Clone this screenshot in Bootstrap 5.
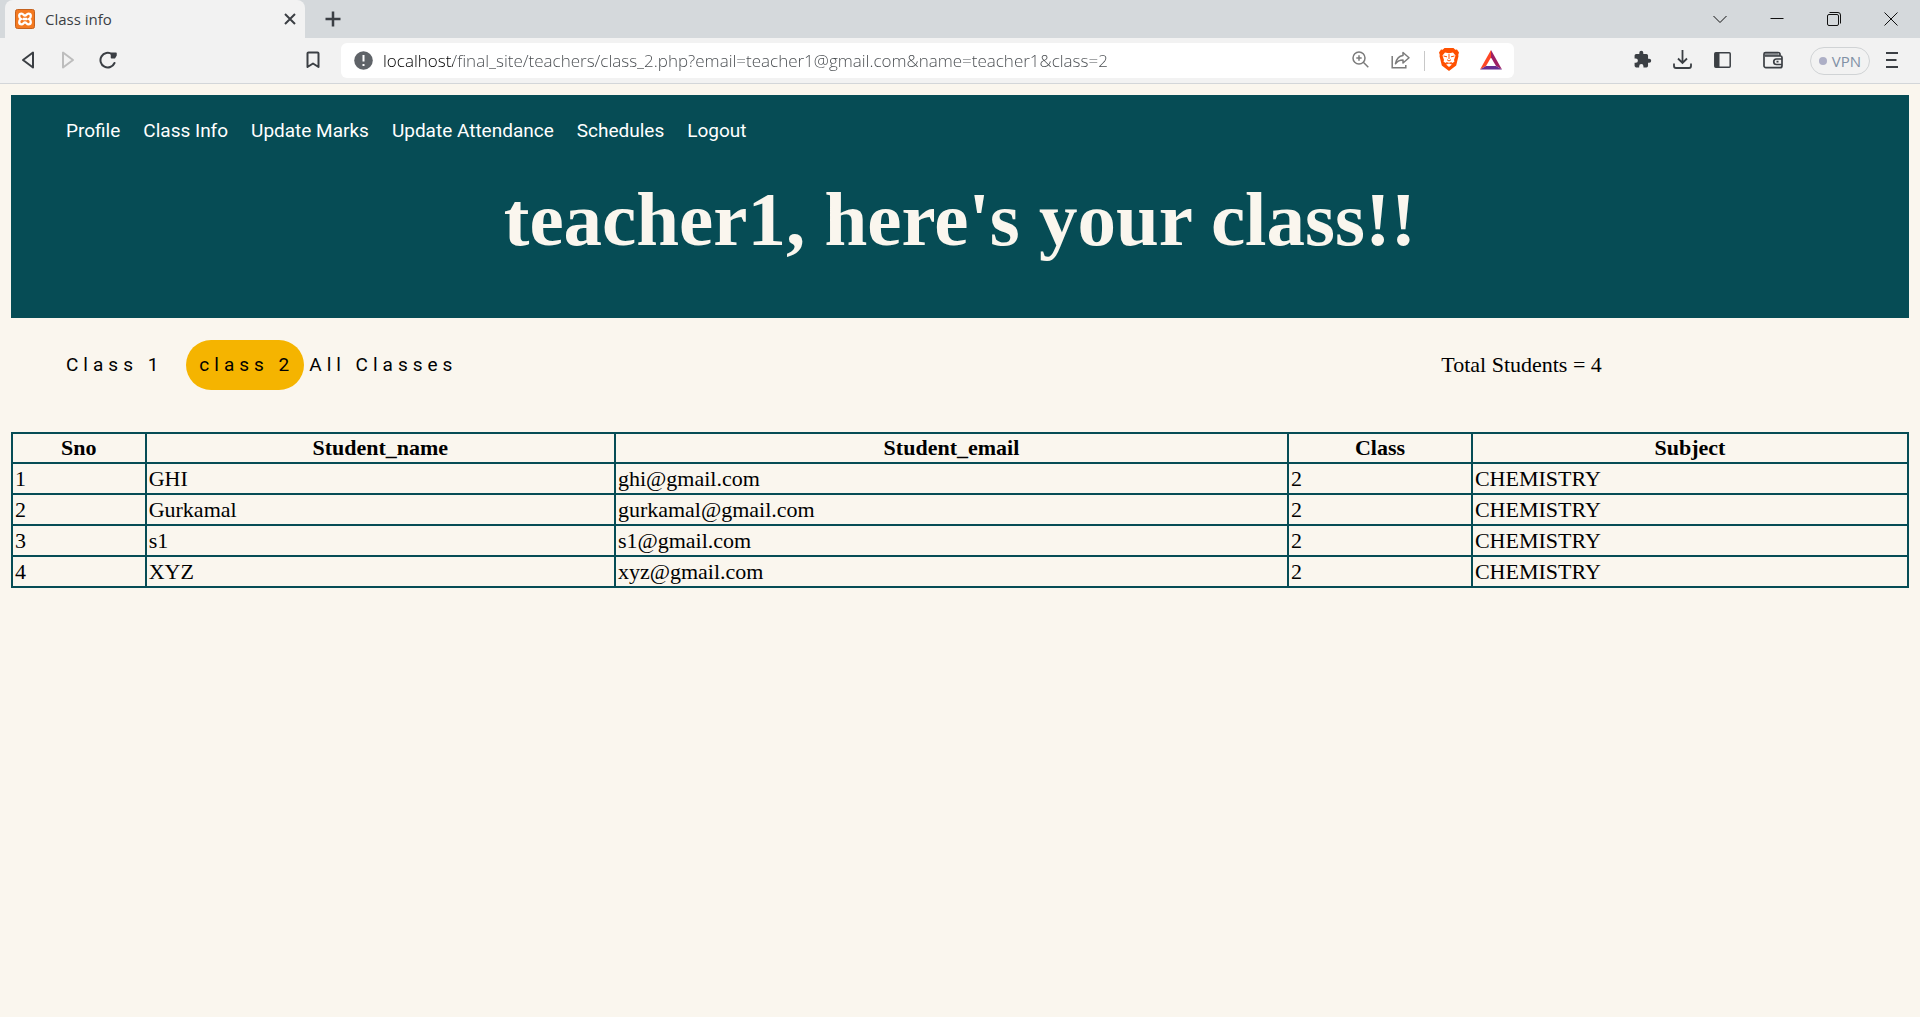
<!DOCTYPE html>
<html lang="en">
<head>
<meta charset="utf-8">
<meta name="viewport" content="width=device-width, initial-scale=1">
<title>Class info</title>
<link href="https://cdn.jsdelivr.net/npm/bootstrap@5.3.0/dist/css/bootstrap.min.css" rel="stylesheet">
<style>
  :root { --teal: #064c55; --cream: #faf6ee; --amber: #f5b400; --ink: #3b3f44; }
  body { background: var(--cream); color: #000; font: 22px/26px "Liberation Serif", serif; }
  .chrome-ui { font: 15px/20px "Open Sans", sans-serif; color: var(--ink); }
  .chrome-ui svg { display: block; fill: none; stroke: currentColor; stroke-width: 2; }
  .tab-strip { background: #d5d9dc; height: 38px; padding: 0 1px 0 5px; }
  .browser-tab { width: 300px; height: 38px; background: #f2f2f2; border-radius: 8px 8px 0 0; padding: 0 5px 0 10px; gap: 10px; }
  .tool-btn { width: 40px; height: 36px; padding: 0; border: 0; background: none; color: inherit; display: flex; align-items: center; justify-content: center; flex: none; }
  .tool-strip .tool-btn { padding-bottom: 2px; }
  .tab-btn { width: 20px; }
  .win-btn { width: 57px; color: #111; }
  .win-btn svg { stroke-width: 1; }
  .tool-strip { background: #f2f2f2; height: 46px; border-bottom: 1px solid #d3d6d9; }
  .tools-left { width: 341px; padding: 0 8px; }
  .tools-right { width: 406px; padding-right: 8px; }
  .wallet-btn { margin-left: 11px; }
  .rewards-btn { margin-left: 2px; }
  .address-bar { height: 35px; background: #fff; border-radius: 6px; padding: 0 3px 0 13px; min-width: 0; }
  .address-bar input { border: 0; outline: 0; padding: 0; margin-left: 10px; min-width: 0; font: 300 17px/24px "Open Sans", sans-serif; color: #45494d;
    background: linear-gradient(90deg, #000 70px, #45494d 70px) text; -webkit-background-clip: text; -webkit-text-fill-color: transparent; }
  .address-bar .tool-btn { color: #7b7b7b; }
  .address-bar .tool-btn svg { stroke-width: 1.5; }
  .divider { width: 1px; height: 20px; background: #c8c8c8; margin: 0 4px; }
  .vpn-btn { width: 60px; height: 28px; border: 1px solid #d0d3d5; border-radius: 14px; background: none; color: #8090a5; padding: 0; gap: 5px; margin: 0 2px 0 17px; }
  .vpn-dot { width: 8px; height: 8px; border-radius: 50%; background: #adafc6; }

  .page-body { padding: 11px; }
  .hero { background: var(--teal); padding: 21px 55px 56px; }
  .hero-nav { gap: 23px; font: 19px/30px Roboto, sans-serif; }
  .hero-nav a { color: #fff; text-decoration: none; }
  .hero h1 { color: var(--cream); font: bold 77px/86px "Liberation Serif", serif; margin: 30px 0 0; }
  .class-row { padding: 22px 0 42px 55px; }
  .class-links { font: 19px/24px Roboto, sans-serif; letter-spacing: 5px; }
  .class-links a { color: #000; text-decoration: none; }
  .class-links .current { background: var(--amber); border-radius: 25px; padding: 13px 10px 13px 13px; margin: 0 5px 0 23px; }
  .total-col { width: 25%; margin-right: 7px; }
  .students { width: 100%; border-collapse: collapse; table-layout: fixed; }
  .students th, .students td { border: 2px solid var(--teal); padding: 1px 2px; height: 31px; }
  .students th { text-align: center; height: 30px; }
</style>
</head>
<body>
<header class="chrome-ui">
  <div class="tab-strip d-flex align-items-center">
    <div class="browser-tab d-flex align-items-center">
      <svg width="20" height="20" viewBox="0 0 20 20"><rect x=".5" y=".5" width="19" height="19" rx="2" fill="#f47920" stroke="#c4621f" stroke-width="1"/><path d="M6.500 4.700c-3 0-3 4-.5 5.300-2.500 1.300-2.500 5.300.5 5.300 2 0 2-2 3.500-2s1.500 2 3.500 2c3 0 3-4 .5-5.300 2.500-1.300 2.500-5.300-.5-5.300-2 0-2 2-3.500 2s-1.500-2-3.500-2zM8 10h4" stroke="#fff" stroke-width="2.300" /></svg>
      <span class="flex-grow-1">Class info</span>
      <button class="tool-btn tab-btn" aria-label="Close tab"><svg width="12" height="12" viewBox="0 0 12 12"><path d="M1 1l10 10M11 1L1 11"/></svg></button>
    </div>
    <button class="tool-btn ms-2" aria-label="New tab"><svg width="16" height="16" viewBox="0 0 16 16"><path d="M8 .5v15M.5 8h15" stroke-width="2.500"/></svg></button>
    <div class="d-flex ms-auto">
      <button class="tool-btn win-btn" aria-label="Search tabs"><svg width="14" height="14" viewBox="0 0 14 14"><path d="M.5 4L7 10.500 13.500 4"/></svg></button>
      <button class="tool-btn win-btn" aria-label="Minimize"><svg width="14" height="14" viewBox="0 0 14 14"><path d="M.5 6.500h13"/></svg></button>
      <button class="tool-btn win-btn" aria-label="Restore"><svg width="14" height="14" viewBox="0 0 14 14"><rect x=".5" y="2.500" width="11" height="11" rx="1.500"/><path d="M2.500 .5H11a2.500 2.500 0 0 1 2.500 2.500v8.500"/></svg></button>
      <button class="tool-btn win-btn" aria-label="Close"><svg width="14" height="14" viewBox="0 0 14 14"><path d="M.5.5l13 13M13.500.5l-13 13"/></svg></button>
    </div>
  </div>
  <div class="tool-strip d-flex align-items-center">
    <div class="tools-left d-flex">
      <button class="tool-btn" aria-label="Back"><svg width="14" height="18" viewBox="0 0 14 18"><path d="M12 1.500v15L2 9z" stroke-linejoin="round"/></svg></button>
      <button class="tool-btn" aria-label="Forward" disabled><svg width="14" height="18" viewBox="0 0 14 18"><path d="M2 1.500v15L12 9z" stroke="#bdbdbd" stroke-linejoin="round"/></svg></button>
      <button class="tool-btn" aria-label="Reload"><svg width="18" height="18" viewBox="0 0 18 18"><path d="M13 3.200A7.300 7.300 0 1 0 15.500 12" stroke-linecap="round"/><path d="M12.500 2.300h4.500v2l-1.500 2.500h-3z" fill="currentColor" stroke-width="1.500" stroke-linejoin="round"/></svg></button>
      <button class="tool-btn ms-auto" aria-label="Bookmark"><svg width="14" height="18" viewBox="0 0 14 18"><path d="M1.500 2.500a1 1 0 0 1 1-1h9a1 1 0 0 1 1 1V16L7 12.500 1.500 16z" stroke-linejoin="round"/></svg></button>
    </div>
    <div class="address-bar d-flex align-items-center flex-grow-1">
      <svg class="flex-shrink-0" width="19" height="19" viewBox="0 0 19 19"><circle cx="9.500" cy="9.500" r="9.300" fill="#5f6368" stroke="none"/><path d="M9.500 4v6.500M9.500 13v2" stroke="#fff"/></svg>
      <input class="flex-grow-1" type="text" aria-label="Address" value="localhost/final_site/teachers/class_2.php?email=teacher1@gmail.com&amp;name=teacher1&amp;class=2">
      <button class="tool-btn" aria-label="Zoom"><svg width="17" height="17" viewBox="0 0 17 17"><circle cx="7" cy="7" r="6"/><path d="M11.300 11.300l5 5M7 4.300v5.400M4.300 7h5.400"/></svg></button>
      <button class="tool-btn" aria-label="Share"><svg width="19" height="18" viewBox="0 0 19 18"><path d="M1.200 5v11.800h13.600V14"/><path d="M12 1.500l6 5.200-6 5.300V9C9 9 6.500 10 4.500 12.700 5.500 8 8 5 12 4.600z" stroke-linejoin="round"/></svg></button>
      <span class="divider"></span>
      <button class="tool-btn" aria-label="Brave Shields"><svg width="20" height="23" viewBox="0 0 20 23"><path d="M5.500 0h9l1.800 1.800L18 1.500l2 3-.8 2.500.3 1-2.300 9.500L10 23l-7.200-5.500L.5 8l.3-1L0 4.500l2-3 1.700.3z" fill="#ff5000" stroke="none"/><path d="M6 4.500l4 .8 4-.8 2.500 3L16 9l-1 3 .5 1.500-2 1.500L12 14l-1 .8 2.200 1.400L10 19l-3.200-2.800L9 14.800 8 14l-1.500 1-2-1.500L5 12 4 9l-.5-1.500z" fill="#fff" stroke="none"/><path d="M4.500 8l3.500.8M15.500 8l-3.500.8M10 6v5M8 11.700l2 1.300 2-1.300M7 16.200l3-1.200 3 1.200" stroke="#ff5000" stroke-width="1"/></svg></button>
      <button class="tool-btn rewards-btn" aria-label="Brave Rewards"><svg width="22" height="20" viewBox="0 0 22 20"><g stroke="none"><path d="M11 0L0 19.500l6-3.500 5-8.500z" fill="#ff4724"/><path d="M11 0l11 19.500L16 16l-5-8.500z" fill="#9e1f63"/><path d="M0 19.500L6 16h10l6 3.500z" fill="#662d91"/></g></svg></button>
    </div>
    <div class="tools-right d-flex align-items-center justify-content-end">
      <button class="tool-btn" aria-label="Extensions"><svg width="19" height="19" viewBox="0 0 24 24"><path d="M20.500 11H19V7a2 2 0 0 0-2-2h-4V3.500a2.500 2.500 0 0 0-5 0V5H4a2 2 0 0 0-2 2v3.800h1.500a2.700 2.700 0 0 1 0 5.400H2V20c0 1.100.9 2 2 2h3.800v-1.500a2.700 2.700 0 0 1 5.400 0V22H17a2 2 0 0 0 2-2v-4h1.500a2.500 2.500 0 0 0 0-5z" fill="currentColor" stroke="none"/></svg></button>
      <button class="tool-btn" aria-label="Downloads"><svg width="19" height="19" viewBox="0 0 19 19"><path d="M9.500 0v13M5 8.500l4.500 4.500L14 8.500M1 13.500V16a2 2 0 0 0 2 2h13a2 2 0 0 0 2-2v-2.500" stroke-width="1.800"/></svg></button>
      <button class="tool-btn" aria-label="Sidebar"><svg width="17" height="16" viewBox="0 0 17 16"><rect x=".8" y=".8" width="15.400" height="14.400" rx="1" stroke-width="1.500"/><path d="M1 1h4.500v14H1z" fill="currentColor" stroke="none"/></svg></button>
      <button class="tool-btn wallet-btn" aria-label="Wallet"><svg width="20" height="18" viewBox="0 0 20 18"><path d="M1.500 2h13.500l1.500 3h-15z" fill="#8a8d90" stroke="none"/><path d="M17 5V3.500A2 2 0 0 0 15 1.500H2.500C1.500 1.500 1 2 1 3v11.500A2 2 0 0 0 3 16.700h14a2 2 0 0 0 2-2V6.500a1.500 1.500 0 0 0-1.500-1.500H2M19 8h-5.500a2.700 2.700 0 0 0 0 5.500H19M13.500 10.700h2" stroke-width="1.700"/></svg></button>
      <button class="vpn-btn d-flex align-items-center justify-content-center"><span class="vpn-dot"></span>VPN</button>
      <button class="tool-btn" aria-label="Menu"><svg width="12" height="16" viewBox="0 0 12 16"><path d="M0 1h12M0 8h10.500M0 15h12"/></svg></button>
    </div>
  </div>
</header>
<main class="page-body">
  <div class="hero">
    <nav class="hero-nav d-flex flex-wrap">
      <a href="#">Profile</a><a href="#">Class Info</a><a href="#">Update Marks</a><a href="#">Update Attendance</a><a href="#">Schedules</a><a href="#">Logout</a>
    </nav>
    <h1 class="text-center">teacher1, here's your class!!</h1>
  </div>
  <div class="class-row d-flex align-items-center justify-content-between">
    <nav class="class-links d-flex align-items-center">
      <a href="#">Class 1</a><a href="#" class="current" aria-current="page">class 2</a><a href="#">All Classes</a>
    </nav>
    <div class="total-col">Total Students = 4</div>
  </div>
  <table class="students">
    <colgroup><col style="width:7.05%"><col style="width:24.75%"><col style="width:35.5%"><col style="width:9.7%"><col style="width:23%"></colgroup>
    <thead><tr><th>Sno</th><th>Student_name</th><th>Student_email</th><th>Class</th><th>Subject</th></tr></thead>
    <tbody>
      <tr><td>1</td><td>GHI</td><td>ghi@gmail.com</td><td>2</td><td>CHEMISTRY</td></tr>
      <tr><td>2</td><td>Gurkamal</td><td>gurkamal@gmail.com</td><td>2</td><td>CHEMISTRY</td></tr>
      <tr><td>3</td><td>s1</td><td>s1@gmail.com</td><td>2</td><td>CHEMISTRY</td></tr>
      <tr><td>4</td><td>XYZ</td><td>xyz@gmail.com</td><td>2</td><td>CHEMISTRY</td></tr>
    </tbody>
  </table>
</main>
<script src="https://cdn.jsdelivr.net/npm/bootstrap@5.3.0/dist/js/bootstrap.bundle.min.js"></script>
</body>
</html>
